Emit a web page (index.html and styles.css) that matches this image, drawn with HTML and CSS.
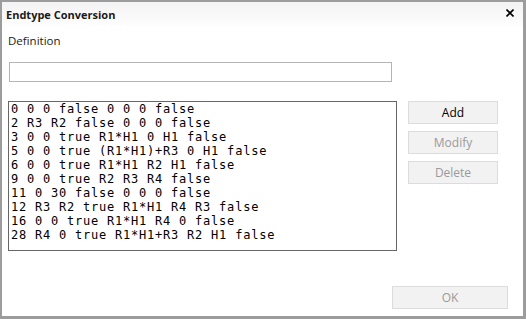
FILE: index.html
```html
<!DOCTYPE html>
<html lang="en">
<head>
    <meta charset="UTF-8">
    <title>Endtype Conversion</title>
    <link rel="stylesheet" href="styles.css">
</head>
<body>
    <div class="window">
        <div class="titlebar">
            <span class="title">Endtype Conversion</span>
            <svg class="close" width="8" height="8" viewBox="0 0 8 8">
                <path d="M0.5 0.5 L7.5 7.5 M7.5 0.5 L0.5 7.5" stroke="#000" stroke-width="1.6" fill="none"/>
            </svg>
        </div>
        <div class="content">
            <label class="label" for="definition">Definition</label>
            <input type="text" id="definition" class="definition">
            <div class="main">
                <div class="list">
                    <div class="row">0 0 0 false 0 0 0 false</div>
                    <div class="row">2 R3 R2 false 0 0 0 false</div>
                    <div class="row">3 0 0 true R1*H1 0 H1 false</div>
                    <div class="row">5 0 0 true (R1*H1)+R3 0 H1 false</div>
                    <div class="row">6 0 0 true R1*H1 R2 H1 false</div>
                    <div class="row">9 0 0 true R2 R3 R4 false</div>
                    <div class="row">11 0 30 false 0 0 0 false</div>
                    <div class="row">12 R3 R2 true R1*H1 R4 R3 false</div>
                    <div class="row">16 0 0 true R1*H1 R4 0 false</div>
                    <div class="row">28 R4 0 true R1*H1+R3 R2 H1 false</div>
                </div>
                <div class="buttons">
                    <button class="btn">Add</button>
                    <button class="btn" disabled>Modify</button>
                    <button class="btn" disabled>Delete</button>
                </div>
            </div>
            <div class="footer">
                <button class="btn ok" disabled>OK</button>
            </div>
        </div>
    </div>
</body>
</html>
```

FILE: styles.css
```css
body {
    margin: 0;
    padding: 0;
    background-color: #ffffff;
    font-family: "Open Sans", Arial, sans-serif;
}

.window {
    width: 526px;
    height: 319px;
    box-sizing: border-box;
    border: 2px solid #9c9c9c;
    border-right-width: 3px;
    border-bottom-width: 3px;
    background: white;
}

.titlebar {
    height: 24px;
    display: flex;
    align-items: center;
    justify-content: space-between;
    padding: 0 9px 0 4px;
    background: linear-gradient(#f3f3f3, #fdfdfd);
}

.title {
    font-size: 11px;
    font-weight: 700;
    color: #1a1a1a;
}

.close {
    display: block;
    margin-top: -2px;
}

.content {
    padding: 0 0 0 6px;
    display: flex;
    flex-direction: column;
    align-items: flex-start;
}

.label {
    margin-top: 7px;
    font-size: 11.5px;
    line-height: 16px;
    color: #1a1a1a;
}

.definition {
    margin: 13px 0 0 1px;
    width: 383px;
    height: 20px;
    box-sizing: border-box;
    border: 1px solid #b4b4b4;
    padding: 0 3px;
    outline: none;
}

.main {
    margin-top: 19px;
    display: flex;
    gap: 11px;
}

.list {
    width: 389px;
    height: 150px;
    box-sizing: border-box;
    border: 1px solid #666666;
    padding: 0 2px;
    font-family: "DejaVu Sans Mono", monospace;
    font-size: 12px;
    letter-spacing: 0.78px;
    line-height: 14px;
    color: #000;
}

.row {
    white-space: nowrap;
}

.buttons {
    display: flex;
    flex-direction: column;
    gap: 7px;
}

.btn {
    width: 90px;
    height: 23px;
    border: 1px solid #dcdcdc;
    background-color: #f2f2f2;
    font-family: "Open Sans", Arial, sans-serif;
    font-size: 12px;
    color: #000;
    padding: 0;
}

.btn:disabled {
    color: #9a9a9a;
}

.footer {
    margin-top: 35px;
    align-self: stretch;
    display: flex;
    justify-content: flex-end;
    padding-right: 15px;
}

.ok {
    width: 116px;
}
```
